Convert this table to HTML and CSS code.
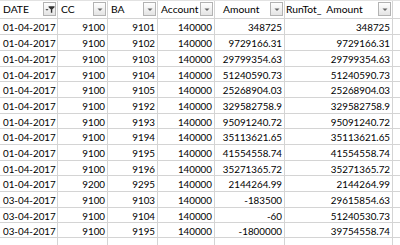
FILE: index.html
```html
<!DOCTYPE html>
<html>
<head>
<meta charset="utf-8">
<link rel="stylesheet" href="styles.css">
</head>
<body>
<div class="sheet">
  <div class="cell hd"><span>DATE</span><span class="btn"><svg width="12" height="12" viewBox="0 0 12 12"><polygon points="1.5,6 5,6 3.25,8" fill="#555"/><polygon points="5,3 11.5,3 11.5,4 9,6.5 9,10 7.5,10 7.5,6.5 5,4" fill="#333"/></svg></span></div>
  <div class="cell hd"><span>CC</span><span class="btn"><svg width="10" height="11" viewBox="0 0 10 11"><polygon points="2.5,4.5 7.5,4.5 5,7" fill="#666"/></svg></span></div>
  <div class="cell hd"><span>BA</span><span class="btn"><svg width="10" height="11" viewBox="0 0 10 11"><polygon points="2.5,4.5 7.5,4.5 5,7" fill="#666"/></svg></span></div>
  <div class="cell hd"><span>Account</span><span class="btn"><svg width="10" height="11" viewBox="0 0 10 11"><polygon points="2.5,4.5 7.5,4.5 5,7" fill="#666"/></svg></span></div>
  <div class="cell hd hd-amt"><span>Amount</span><span class="btn"><svg width="10" height="11" viewBox="0 0 10 11"><polygon points="2.5,4.5 7.5,4.5 5,7" fill="#666"/></svg></span></div>
  <div class="cell hd hd-rt"><span>RunTot_&nbsp; Amount</span><span class="btn"><svg width="10" height="11" viewBox="0 0 10 11"><polygon points="2.5,4.5 7.5,4.5 5,7" fill="#666"/></svg></span></div>
  <div class="cell blank"></div>

  <div class="cell">01-04-2017</div><div class="cell num">9100</div><div class="cell num">9101</div><div class="cell num">140000</div><div class="cell num">348725</div><div class="cell num">348725</div><div class="cell blank"></div>
  <div class="cell">01-04-2017</div><div class="cell num">9100</div><div class="cell num">9102</div><div class="cell num">140000</div><div class="cell num">9729166.31</div><div class="cell num">9729166.31</div><div class="cell blank"></div>
  <div class="cell">01-04-2017</div><div class="cell num">9100</div><div class="cell num">9103</div><div class="cell num">140000</div><div class="cell num">29799354.63</div><div class="cell num">29799354.63</div><div class="cell blank"></div>
  <div class="cell">01-04-2017</div><div class="cell num">9100</div><div class="cell num">9104</div><div class="cell num">140000</div><div class="cell num">51240590.73</div><div class="cell num">51240590.73</div><div class="cell blank"></div>
  <div class="cell">01-04-2017</div><div class="cell num">9100</div><div class="cell num">9105</div><div class="cell num">140000</div><div class="cell num">25268904.03</div><div class="cell num">25268904.03</div><div class="cell blank"></div>
  <div class="cell">01-04-2017</div><div class="cell num">9100</div><div class="cell num">9192</div><div class="cell num">140000</div><div class="cell num">329582758.9</div><div class="cell num">329582758.9</div><div class="cell blank"></div>
  <div class="cell">01-04-2017</div><div class="cell num">9100</div><div class="cell num">9193</div><div class="cell num">140000</div><div class="cell num">95091240.72</div><div class="cell num">95091240.72</div><div class="cell blank"></div>
  <div class="cell">01-04-2017</div><div class="cell num">9100</div><div class="cell num">9194</div><div class="cell num">140000</div><div class="cell num">35113621.65</div><div class="cell num">35113621.65</div><div class="cell blank"></div>
  <div class="cell">01-04-2017</div><div class="cell num">9100</div><div class="cell num">9195</div><div class="cell num">140000</div><div class="cell num">41554558.74</div><div class="cell num">41554558.74</div><div class="cell blank"></div>
  <div class="cell">01-04-2017</div><div class="cell num">9100</div><div class="cell num">9196</div><div class="cell num">140000</div><div class="cell num">35271365.72</div><div class="cell num">35271365.72</div><div class="cell blank"></div>
  <div class="cell">01-04-2017</div><div class="cell num">9200</div><div class="cell num">9295</div><div class="cell num">140000</div><div class="cell num">2144264.99</div><div class="cell num">2144264.99</div><div class="cell blank"></div>
  <div class="cell">03-04-2017</div><div class="cell num">9100</div><div class="cell num">9103</div><div class="cell num">140000</div><div class="cell num">-183500</div><div class="cell num">29615854.63</div><div class="cell blank"></div>
  <div class="cell">03-04-2017</div><div class="cell num">9100</div><div class="cell num">9104</div><div class="cell num">140000</div><div class="cell num">-60</div><div class="cell num">51240530.73</div><div class="cell blank"></div>
  <div class="cell">03-04-2017</div><div class="cell num">9100</div><div class="cell num">9195</div><div class="cell num">140000</div><div class="cell num">-1800000</div><div class="cell num">39754558.74</div><div class="cell blank"></div>

  <div class="cell"></div><div class="cell"></div><div class="cell"></div><div class="cell"></div><div class="cell"></div><div class="cell"></div><div class="cell blank"></div>
</div>
</body>
</html>
```
FILE: styles.css
```css
html, body {
  margin: 0;
  padding: 0;
  background: #ffffff;
}
.sheet {
  display: grid;
  width: 400px;
  height: 245px;
  overflow: hidden;
  grid-template-columns: 58px 50px 50px 57px 70px 108px 7px;
  grid-template-rows: 18px 16px 16px 16px 15px 16px 16px 15px 16px 16px 15px 16px 16px 15px 15px 9px;
  font-family: Lato, "Open Sans", sans-serif;
  font-size: 9.8px;
  color: #000000;
  border-top: 1px solid #e2e2e2;
  box-sizing: border-box;
}
.cell {
  box-sizing: border-box;
  border-right: 1px solid #d4d4d4;
  border-bottom: 1px solid #d4d4d4;
  padding: 2px 2px 0 3px;
  line-height: 13px;
  white-space: nowrap;
  overflow: hidden;
}
.num {
  text-align: right;
  padding-right: 2px;
}
.blank {
  border-right: none;
}
.hd {
  display: flex;
  align-items: center;
  justify-content: space-between;
  padding: 0 1px 1px 3px;
  font-size: 10.3px;
}
.hd-amt {
  padding-left: 8px;
}
.hd-rt {
  padding-left: 1px;
}
.btn {
  box-sizing: border-box;
  width: 13px;
  height: 14px;
  border: 1px solid #b3b3b3;
  background: linear-gradient(#ffffff, #e4e4e4);
  display: flex;
  align-items: center;
  justify-content: center;
  flex: none;
}
.btn svg {
  display: block;
}
```
